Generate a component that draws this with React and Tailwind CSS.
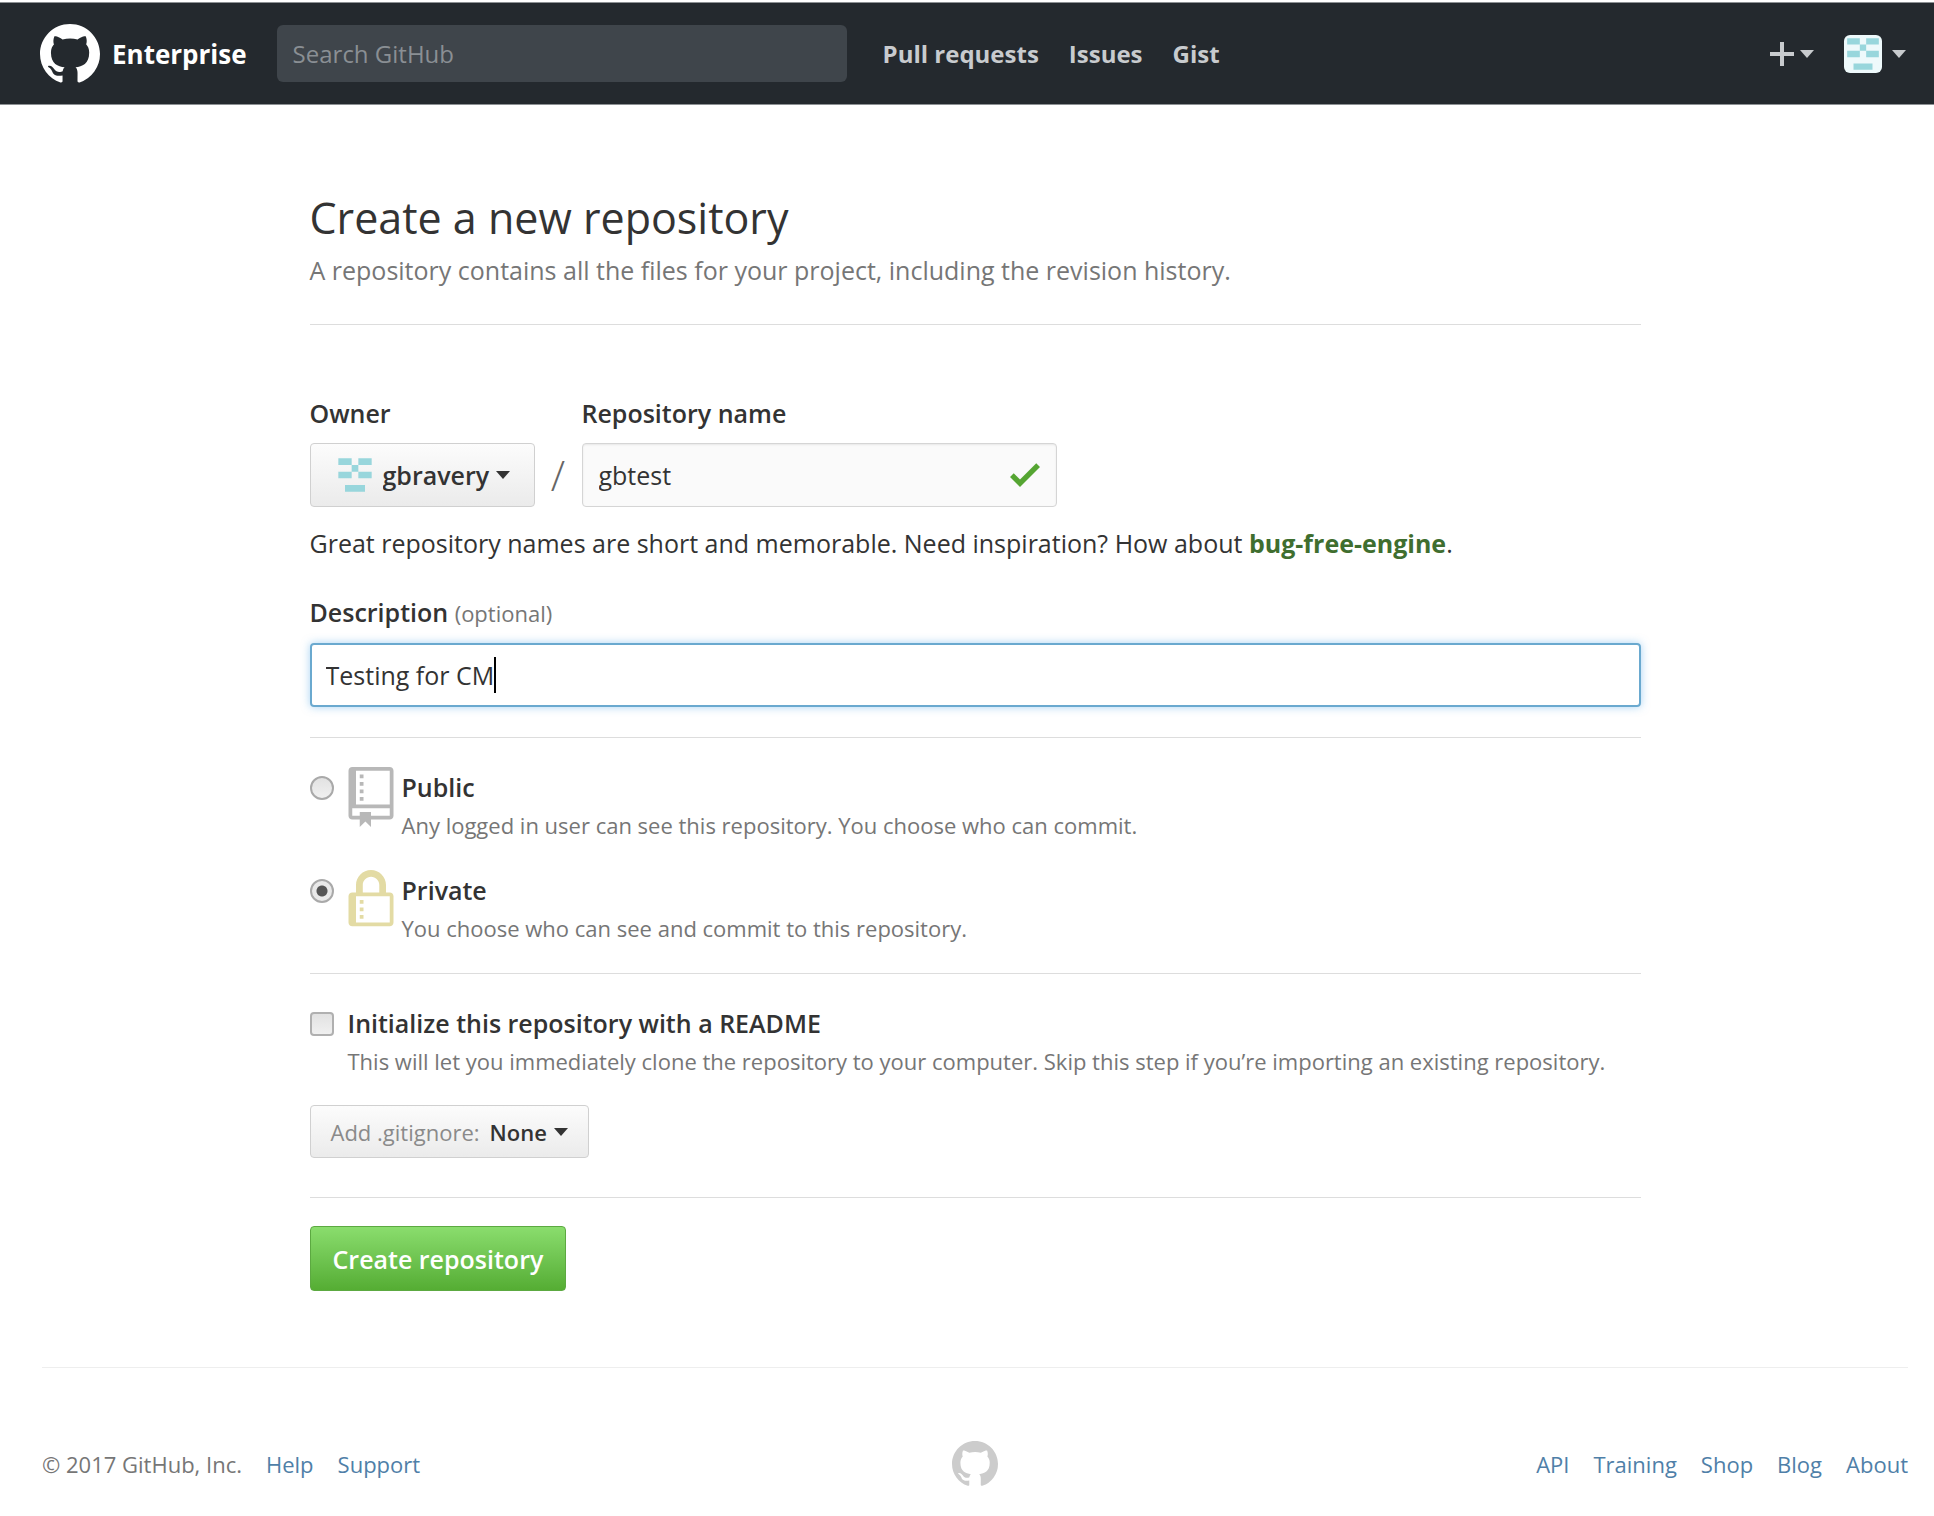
import React from "react";

const MARK =
  "M8 0C3.58 0 0 3.58 0 8c0 3.54 2.29 6.53 5.47 7.59.4.07.55-.17.55-.38 0-.19-.01-.82-.01-1.49-2.01.37-2.53-.49-2.69-.94-.09-.23-.48-.94-.82-1.13-.28-.15-.68-.52-.01-.53.63-.01 1.08.58 1.23.82.72 1.21 1.87.87 2.33.66.07-.52.28-.87.51-1.07-1.78-.2-3.64-.89-3.64-3.95 0-.87.31-1.59.82-2.15-.08-.2-.36-1.02.08-2.12 0 0 .67-.21 2.2.82.64-.18 1.32-.27 2-.27.68 0 1.36.09 2 .27 1.53-1.04 2.2-.82 2.2-.82.44 1.1.16 1.92.08 2.12.51.56.82 1.27.82 2.15 0 3.07-1.87 3.75-3.65 3.95.29.25.54.73.54 1.48 0 1.07-.01 1.93-.01 2.2 0 .21.15.46.55.38A8.013 8.013 0 0 0 16 8c0-4.42-3.58-8-8-8z";
const REPO =
  "M4 9H3V8h1v1zm0-3H3v1h1V6zm0-2H3v1h1V4zm0-2H3v1h1V2zm8-1v12c0 .55-.45 1-1 1H6v2l-1.5-1.5L3 16v-2H1c-.55 0-1-.45-1-1V1c0-.55.45-1 1-1h10c.55 0 1 .45 1 1zm-1 10H1v2h2v-1h3v1h5v-2zm0-10H2v9h9V1z";
const LOCK =
  "M4 13H3v-1h1v1zm8-6v7c0 .55-.45 1-1 1H1c-.55 0-1-.45-1-1V7c0-.55.45-1 1-1h1V4c0-2.2 1.8-4 4-4s4 1.8 4 4v2h1c.55 0 1 .45 1 1zM3.8 6h4.41V4c0-1.22-.98-2.2-2.2-2.2-1.22 0-2.2.98-2.2 2.2v2H3.8zM11 7H2v7h9V7zM4 8H3v1h1V8zm0 2H3v1h1v-1z";

function Icon({ d, box, className }) {
  return (
    <svg viewBox={box} className={className} fill="currentColor" aria-hidden="true">
      <path d={d} />
    </svg>
  );
}

function Caret({ className }) {
  return <Icon box="0 0 14 8" d="M0 0h14L7 8z" className={className} />;
}

function Identicon({ className }) {
  return (
    <svg viewBox="0 0 6 6" className={className} aria-hidden="true">
      <path
        fill="#98d6dc"
        d="M.5.5h2v1h-2zM3.5.5h2v1h-2zM2.5 1.5h1v1h-1zM.5 2.5h2v1h-2zM3.5 2.5h2v1h-2zM1.5 4.5h3v1h-3z"
      />
    </svg>
  );
}

function Header() {
  return (
    <header className="mt-0.5 flex items-center border-y border-[#8d9194] bg-[#24292e] py-[22px] pr-7 pl-10 text-2xl leading-9 font-bold text-[#c8cbce]">
      <a href="#home" className="flex items-center gap-3 text-white">
        <Icon d={MARK} box="0 0 16 16" className="-my-1 size-[60px]" />
        <span className="text-[26px]">Enterprise</span>
      </a>
      <input
        type="search"
        aria-label="Search GitHub"
        placeholder="Search GitHub"
        className="ml-[30px] h-[57px] w-[570px] rounded-md bg-[#3f454b] px-4 font-normal text-white outline-none placeholder:text-[#8a8f94]"
      />
      <nav className="ml-9 flex gap-[30px]">
        <a href="#pulls">Pull requests</a>
        <a href="#issues">Issues</a>
        <a href="#gist">Gist</a>
      </nav>
      <div className="ml-auto flex items-center gap-[30px]">
        <button type="button" aria-label="Create new" className="flex items-center gap-1.5">
          <Icon box="0 0 24 24" d="M10 0h4v10h10v4H14v10h-4V14H0v-4h10z" className="size-6" />
          <Caret className="h-2 w-3.5" />
        </button>
        <button type="button" aria-label="Account" className="flex items-center gap-2.5">
          <Identicon className="size-[38px] rounded-md bg-[#eef9fb]" />
          <Caret className="h-2 w-3.5" />
        </button>
      </div>
    </header>
  );
}

function Visibility({ id, icon, color, title, text, checked }) {
  return (
    <div className="flex items-start">
      <input
        id={id}
        type="radio"
        name="visibility"
        defaultChecked={checked}
        className="mt-[9px] size-6 appearance-none rounded-full border-2 border-[#a9a9a9] bg-linear-to-b from-[#e2e2e2] to-[#f0f0f0] checked:bg-[radial-gradient(circle,#555_0_5px,#e9e9e9_6px)]"
      />
      <Icon d={icon} box="0 0 12 16" className={`ml-3.5 h-[60px] w-[46px] ${color}`} />
      <label htmlFor={id} className="mt-0.5 ml-2">
        <span className="block text-[25px] leading-9 font-semibold">{title}</span>
        <span className="mt-1 block text-[22px] leading-8 text-[#767676]">{text}</span>
      </label>
    </div>
  );
}

const RULE = "border-t border-[#dddddd]";

export default function App() {
  return (
    <div className="min-h-screen bg-white font-['Open_Sans','Noto_Sans',sans-serif] text-[#333333]">
      <Header />
      <main className="pr-[26px] pl-[42px]">
        <form className="mx-auto max-w-[1331px] text-[25px] leading-9" onSubmit={(e) => e.preventDefault()}>
          <header className="border-b border-[#dddddd] pt-[85px] pb-9">
            <h1 className="text-[43px] leading-14">Create a new repository</h1>
            <p className="mt-1.5 text-[#767676]">
              A repository contains all the files for your project, including the revision history.
            </p>
          </header>

          <div className="mt-[70px] flex items-end">
            <div>
              <label htmlFor="owner" className="block font-semibold">
                Owner
              </label>
              <div className="mt-3 flex h-16 items-center rounded-[4px] border border-[#d0d0d0] bg-linear-to-b from-[#fcfcfc] to-[#ebebeb] px-6">
                <Identicon className="size-10" />
                <select id="owner" className="ml-2 appearance-none font-semibold outline-none">
                  <option>gbravery</option>
                </select>
                <Caret className="ml-1.5 h-2 w-3.5" />
              </div>
            </div>
            <span className="w-[47px] pb-3 text-center text-[42px] leading-10 font-light text-[#666666]">/</span>
            <div>
              <label htmlFor="name" className="block font-semibold">
                Repository name
              </label>
              <div className="mt-3 flex h-16 w-[475px] items-center rounded-[4px] border border-[#d5d5d5] bg-[#fafafa] px-4 shadow-[inset_0_1px_2px_rgba(0,0,0,0.075)]">
                <input id="name" defaultValue="gbtest" className="min-w-0 flex-1 outline-none" />
                <Icon
                  box="0 3.5 12 9.5"
                  d="M12 5l-8 8-4-4 1.5-1.5L4 10l6.5-6.5z"
                  className="h-6 w-[30px] text-[#55a532]"
                />
              </div>
            </div>
          </div>

          <p className="mt-[18px]">
            Great repository names are short and memorable. Need inspiration? How about{" "}
            <strong className="font-bold text-[#3f6e2f]">bug-free-engine</strong>.
          </p>

          <label htmlFor="description" className="mt-[33px] block font-semibold">
            Description <span className="text-[22px] font-medium text-[#767676]">(optional)</span>
          </label>
          <div className="mt-3 flex h-16 items-center rounded-[4px] border-2 border-[#6aa9cf] px-3.5 shadow-[0_0_8px_rgba(81,167,232,0.5)]">
            <input id="description" defaultValue="Testing for CM" className="field-sizing-content outline-none" />
            <span className="h-9 w-0.5 bg-black" />
          </div>

          <div className={`mt-[30px] flex flex-col gap-[29px] pt-[29px] ${RULE}`}>
            <Visibility
              id="public"
              icon={REPO}
              color="text-[#b8b8b8]"
              title="Public"
              text="Any logged in user can see this repository. You choose who can commit."
            />
            <Visibility
              id="private"
              icon={LOCK}
              color="text-[#e3dba4]"
              title="Private"
              text="You choose who can see and commit to this repository."
              checked
            />
          </div>

          <div className={`mt-[29px] flex items-start pt-[31px] ${RULE}`}>
            <input
              id="readme"
              type="checkbox"
              className="mt-[7px] size-6 shrink-0 appearance-none rounded-[4px] border-2 border-[#b0b0b0] bg-linear-to-b from-[#e2e2e2] to-[#f0f0f0]"
            />
            <label htmlFor="readme" className="ml-3.5">
              <span className="block font-semibold">Initialize this repository with a README</span>
              <span className="mt-1 block text-[22px] leading-8 text-[#767676]">
                This will let you immediately clone the repository to your computer. Skip this step if you’re importing an
                existing repository.
              </span>
            </label>
          </div>

          <div className="mt-7 flex h-[53px] w-fit items-center rounded-[4px] border border-[#d0d0d0] bg-linear-to-b from-[#fcfcfc] to-[#ebebeb] px-5 text-[22px] leading-8">
            <label htmlFor="gitignore" className="font-medium text-[#8a8a8a]">
              Add .gitignore:
            </label>
            <select id="gitignore" className="ml-2.5 appearance-none font-semibold outline-none">
              <option>None</option>
            </select>
            <Caret className="ml-1.5 h-2 w-3.5" />
          </div>

          <div className={`mt-[39px] pt-7 ${RULE}`}>
            <button
              type="submit"
              className="h-[65px] rounded-[4px] border border-[#5ca941] bg-linear-to-b from-[#8add6d] to-[#55ad33] px-[22px] font-semibold text-white"
            >
              Create repository
            </button>
          </div>
        </form>

        <footer className="mt-[76px] grid grid-cols-[1fr_auto_1fr] items-center border-t border-[#eeeeee] pt-[73px] pb-7 text-[22px] leading-8 text-[#4f7fa8]">
          <div className="flex gap-6">
            <span className="text-[#767676]">© 2017 GitHub, Inc.</span>
            <a href="#help">Help</a>
            <a href="#support">Support</a>
          </div>
          <Icon d={MARK} box="0 0 16 16" className="size-[46px] text-[#cccccc]" />
          <nav className="flex justify-end gap-6">
            <a href="#api">API</a>
            <a href="#training">Training</a>
            <a href="#shop">Shop</a>
            <a href="#blog">Blog</a>
            <a href="#about">About</a>
          </nav>
        </footer>
      </main>
    </div>
  );
}
